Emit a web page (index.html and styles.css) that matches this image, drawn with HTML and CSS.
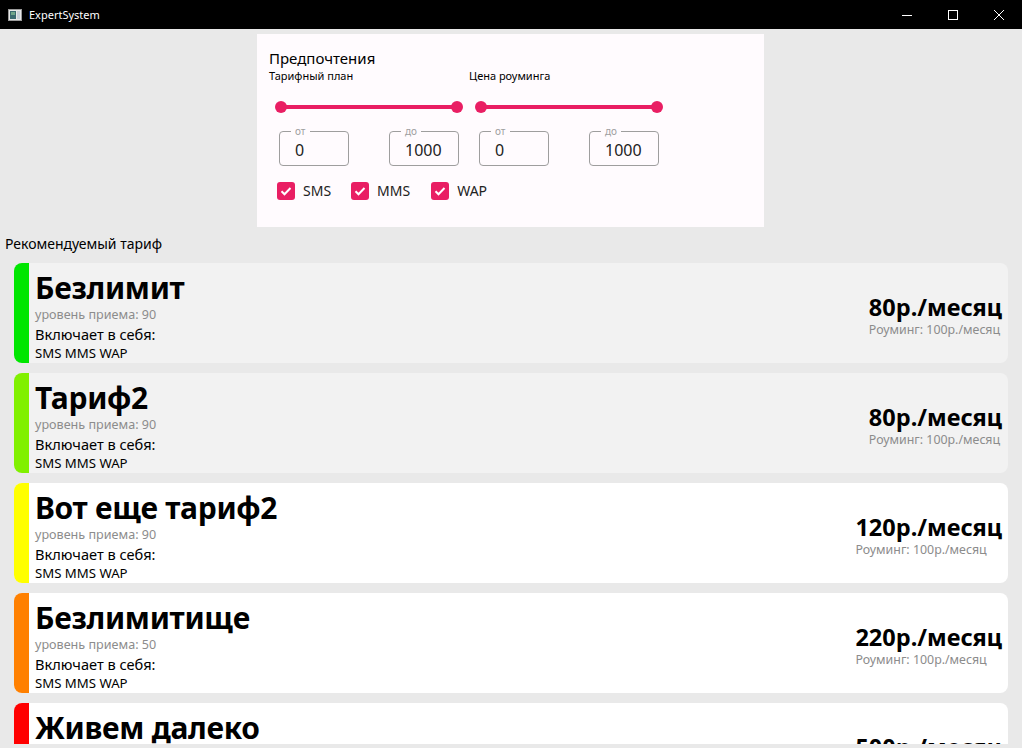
FILE: index.html
```html
<!DOCTYPE html>
<html lang="ru">
<head>
<meta charset="utf-8">
<title>ExpertSystem</title>
<link rel="stylesheet" href="styles.css">
</head>
<body>
<div class="window">
  <header class="titlebar">
    <div class="app">
      <svg class="app-icon" width="14" height="12" viewBox="0 0 14 12">
        <rect x="0.5" y="0.5" width="13" height="11" fill="#e8e8e8" stroke="#9a9a9a"/>
        <rect x="2" y="2" width="6" height="8" fill="#3a6a70"/>
        <rect x="3" y="3" width="4" height="3" fill="#6fa58a"/>
        <rect x="9" y="2" width="3" height="8" fill="#c8d0d8"/>
      </svg>
      <span class="app-title">ExpertSystem</span>
    </div>
    <div class="controls">
      <span class="ctl"><svg width="12" height="12" viewBox="0 0 12 12"><path d="M1 6.5h10" stroke="#fff" stroke-width="1"/></svg></span>
      <span class="ctl"><svg width="12" height="12" viewBox="0 0 12 12"><rect x="1.5" y="1.5" width="9" height="9" fill="none" stroke="#fff" stroke-width="1"/></svg></span>
      <span class="ctl"><svg width="12" height="12" viewBox="0 0 12 12"><path d="M1 1l10 10M11 1L1 11" stroke="#fff" stroke-width="1"/></svg></span>
    </div>
  </header>

  <main class="content">
    <section class="prefs">
      <div class="prefs-title">Предпочтения</div>
      <div class="prefs-cols">
        <div class="col">
          <div class="col-label">Тарифный план</div>
          <div class="slider"><span class="thumb"></span><span class="track"></span><span class="thumb"></span></div>
          <div class="fields">
            <div class="field"><span class="field-label">от</span><span class="field-value">0</span></div>
            <div class="field"><span class="field-label">до</span><span class="field-value">1000</span></div>
          </div>
        </div>
        <div class="col">
          <div class="col-label">Цена роуминга</div>
          <div class="slider"><span class="thumb"></span><span class="track"></span><span class="thumb"></span></div>
          <div class="fields">
            <div class="field"><span class="field-label">от</span><span class="field-value">0</span></div>
            <div class="field"><span class="field-label">до</span><span class="field-value">1000</span></div>
          </div>
        </div>
      </div>
      <div class="checks">
        <label class="check"><span class="box"><svg width="18" height="18" viewBox="0 0 18 18"><path d="M4.5 9.2l3 3 6-6.2" fill="none" stroke="#fff" stroke-width="2"/></svg></span>SMS</label>
        <label class="check"><span class="box"><svg width="18" height="18" viewBox="0 0 18 18"><path d="M4.5 9.2l3 3 6-6.2" fill="none" stroke="#fff" stroke-width="2"/></svg></span>MMS</label>
        <label class="check"><span class="box"><svg width="18" height="18" viewBox="0 0 18 18"><path d="M4.5 9.2l3 3 6-6.2" fill="none" stroke="#fff" stroke-width="2"/></svg></span>WAP</label>
      </div>
    </section>

    <div class="rec-title">Рекомендуемый тариф</div>

    <div class="list">
      <div class="card card-grey">
        <div class="strip strip-green"></div>
        <div class="info">
          <div class="name">Безлимит</div>
          <div class="level">уровень приема: 90</div>
          <div class="includes">Включает в себя:</div>
          <div class="services">SMS MMS WAP</div>
        </div>
        <div class="price">
          <div class="cost">80р./месяц</div>
          <div class="roam">Роуминг: 100р./месяц</div>
        </div>
      </div>
      <div class="card card-grey">
        <div class="strip strip-lime"></div>
        <div class="info">
          <div class="name">Тариф2</div>
          <div class="level">уровень приема: 90</div>
          <div class="includes">Включает в себя:</div>
          <div class="services">SMS MMS WAP</div>
        </div>
        <div class="price">
          <div class="cost">80р./месяц</div>
          <div class="roam">Роуминг: 100р./месяц</div>
        </div>
      </div>
      <div class="card">
        <div class="strip strip-yellow"></div>
        <div class="info">
          <div class="name">Вот еще тариф2</div>
          <div class="level">уровень приема: 90</div>
          <div class="includes">Включает в себя:</div>
          <div class="services">SMS MMS WAP</div>
        </div>
        <div class="price">
          <div class="cost">120р./месяц</div>
          <div class="roam">Роуминг: 100р./месяц</div>
        </div>
      </div>
      <div class="card">
        <div class="strip strip-orange"></div>
        <div class="info">
          <div class="name">Безлимитище</div>
          <div class="level">уровень приема: 50</div>
          <div class="includes">Включает в себя:</div>
          <div class="services">SMS MMS WAP</div>
        </div>
        <div class="price">
          <div class="cost">220р./месяц</div>
          <div class="roam">Роуминг: 100р./месяц</div>
        </div>
      </div>
      <div class="card">
        <div class="strip strip-red"></div>
        <div class="info">
          <div class="name">Живем далеко</div>
          <div class="level">уровень приема: 10</div>
          <div class="includes">Включает в себя:</div>
          <div class="services">SMS MMS WAP</div>
        </div>
        <div class="price">
          <div class="cost">500р./месяц</div>
          <div class="roam">Роуминг: 500р./месяц</div>
        </div>
      </div>
    </div>
  </main>
</div>
</body>
</html>
```

FILE: styles.css
```css
* { box-sizing: border-box; }
html, body { margin: 0; padding: 0; }
body {
  width: 1022px;
  height: 748px;
  overflow: hidden;
  font-family: "Noto Sans", "Open Sans", sans-serif;
  background: #e9e9e9;
  color: #000;
}
.window { display: flex; flex-direction: column; height: 748px; }

.titlebar {
  height: 29px;
  flex: none;
  background: #000;
  color: #fff;
  display: flex;
  align-items: center;
  justify-content: space-between;
}
.app { display: flex; align-items: center; padding-left: 8px; gap: 7px; }
.app-icon { display: block; }
.app-title { font-size: 11px; }
.controls { display: flex; height: 29px; }
.ctl { width: 46px; display: flex; align-items: center; justify-content: center; }
.ctl svg { display: block; }

.content {
  flex: 1;
  height: 715px;
  overflow: hidden;
  padding-top: 5px;
  display: flex;
  flex-direction: column;
  margin-bottom: 4px;
}

.prefs {
  align-self: flex-start;
  margin-left: 257px;
  width: 507px;
  height: 193px;
  background: #fffbfe;
  padding: 14px 12px 0 12px;
  flex: none;
}
.prefs-title { font-size: 15px; line-height: 20px; }
.prefs-cols { display: flex; }
.col { width: 200px; }
.col-label { font-size: 11px; line-height: 15px; }
.slider {
  display: flex;
  align-items: center;
  margin: 18px 0 0 6px;
  width: 188px;
  height: 12px;
}
.thumb { width: 12px; height: 12px; border-radius: 50%; background: #e91e63; flex: none; }
.track { flex: 1; height: 4px; background: #e91e63; margin: 0 -2px; }
.fields { display: flex; gap: 40px; margin: 18px 0 0 10px; }
.field {
  position: relative;
  width: 70px;
  height: 35px;
  border: 1px solid #9e9e9e;
  border-radius: 4px;
  display: flex;
  align-items: center;
  padding: 3px 0 0 15px;
}
.field-label {
  position: absolute;
  top: -7px;
  left: 11px;
  font-size: 10px;
  line-height: 12px;
  color: #9e9e9e;
  background: #fffbfe;
  padding: 0 4px;
}
.field-value { font-size: 16px; color: #222; }

.checks { display: flex; margin: 15px 0 0 8px; }
.check { display: flex; align-items: center; font-size: 14px; color: #222; }
.check:nth-child(1) { margin-right: 20px; }
.check:nth-child(2) { margin-right: 21px; }
.box {
  width: 18px;
  height: 18px;
  border-radius: 3px;
  background: #e91e63;
  margin-right: 8px;
}
.box svg { display: block; }

.rec-title { font-size: 14px; line-height: 20px; margin: 7px 0 0 5px; flex: none; }

.list {
  display: flex;
  flex-direction: column;
  gap: 10px;
  margin: 9px 14px 0 14px;
}
.card {
  flex: none;
  height: 100px;
  border-radius: 8px;
  background: #fff;
  display: flex;
  overflow: hidden;
}
.card-grey { background: #f2f2f2; }
.strip { width: 15px; flex: none; }
.strip-green { background: #00e600; }
.strip-lime { background: #80f000; }
.strip-yellow { background: #ffff00; }
.strip-orange { background: #ff8000; }
.strip-red { background: #ff0000; }

.info { flex: 1; padding: 7px 0 0 6px; }
.name { font-size: 30px; font-weight: 700; line-height: 36px; letter-spacing: -0.3px; }
.level { font-size: 12.6px; color: #8c8c8c; line-height: 16px; margin-top: 1px; }
.includes { font-size: 14.6px; line-height: 20px; margin-top: 1px; }
.services { font-size: 13.2px; line-height: 16px; margin-top: 1px; }

.price { padding: 30px 6px 0 0; }
.cost { font-size: 23.5px; font-weight: 700; line-height: 28px; }
.roam { font-size: 12.4px; color: #8c8c8c; line-height: 14px; margin-top: 2px; }
```
